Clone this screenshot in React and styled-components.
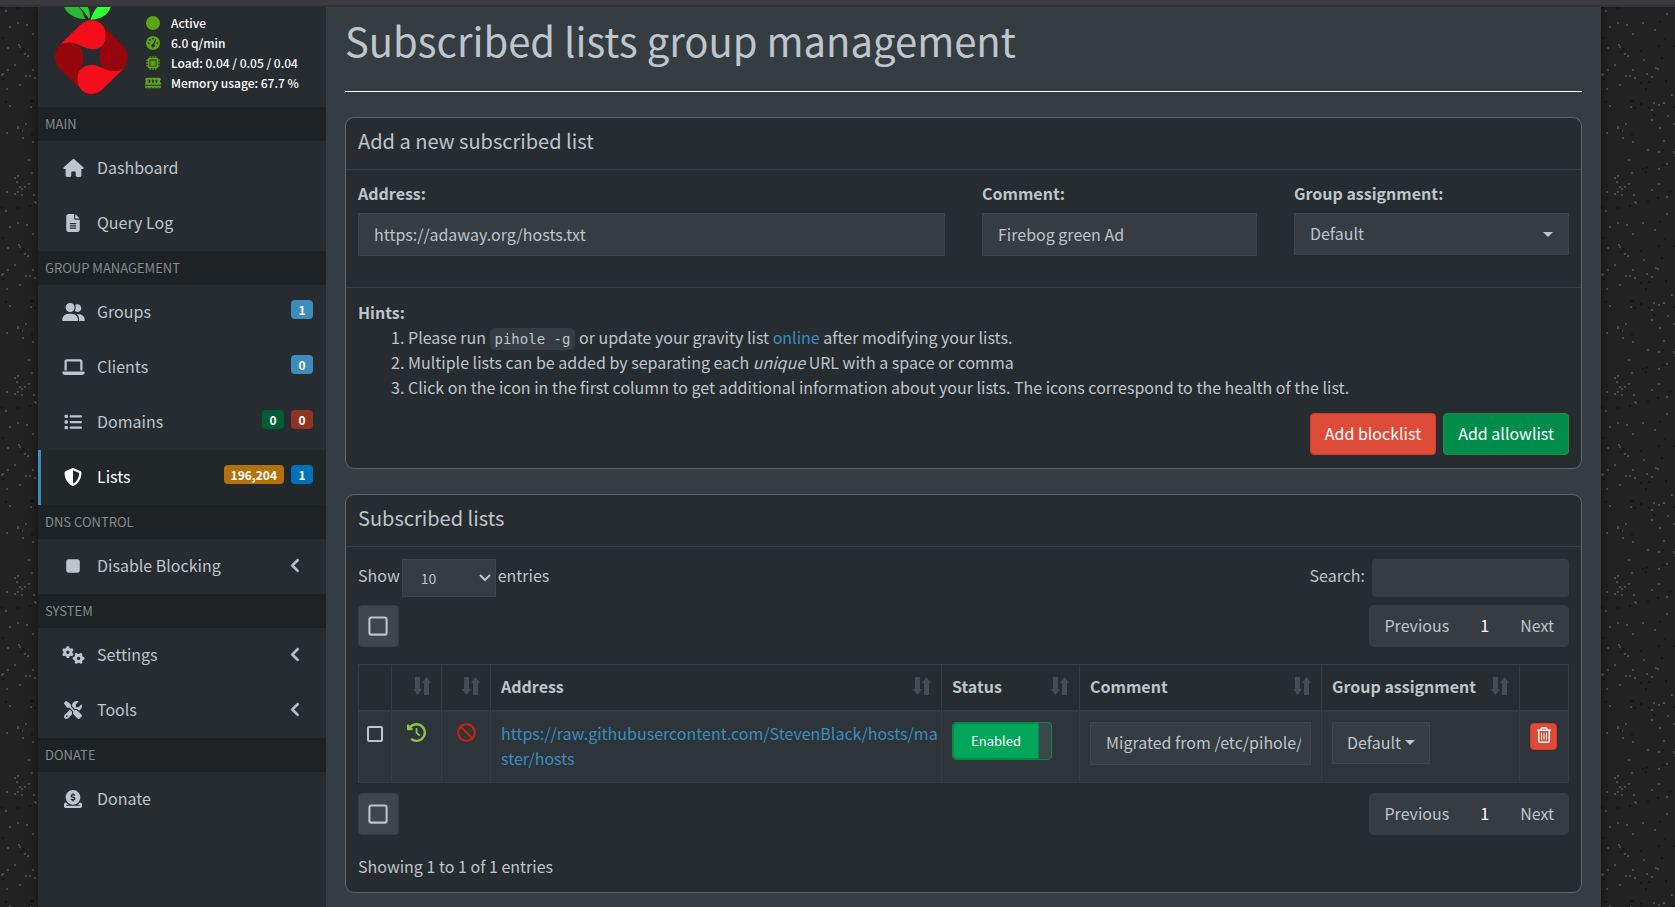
import React, { useState } from "react";
import styled, { createGlobalStyle } from "styled-components";
import {
  FaHouse, FaFileLines, FaUserGroup, FaLaptop, FaList, FaShieldHalved, FaStop,
  FaGears, FaScrewdriverWrench, FaCircleDollarToSlot, FaAngleLeft, FaCircle,
  FaMicrochip, FaMemory, FaRegSquare, FaClockRotateLeft, FaBan,
  FaRegTrashCan, FaGaugeHigh,
} from "react-icons/fa6";

const c = {
  page: "#222222",
  sidebar: "#272c30",
  sidebarHead: "#1e2225",
  active: "#22272a",
  content: "#353c42",
  line: "#353c42",
  field: "#353c42",
  fieldLine: "#3d444b",
  text: "#bec5cb",
  muted: "#848c8f",
  link: "#3c8dbc",
  row: "#2d343a",
};

/* Speckled tile for the area outside the boxed layout */
const speckle = (() => {
  let seed = 41;
  const next = (n) => {
    seed = (seed * 16807) % 2147483647;
    return seed % n;
  };
  let dots = "";
  for (let i = 0; i < 300; i += 1) {
    dots += `<rect x='${next(199)}' y='${next(199)}' width='2' height='2' fill='${i % 3 ? "#494949" : "#171717"}'/>`;
  }
  const svg = `<svg xmlns='http://www.w3.org/2000/svg' width='200' height='200'>${dots}</svg>`;
  return `url("data:image/svg+xml,${encodeURIComponent(svg).replace(/'/g, "%27")}")`;
})();

const Global = createGlobalStyle`
  *, *::before, *::after { box-sizing: border-box; }
  body {
    margin: 0;
    background: ${c.page} ${speckle};
    color: ${c.text};
    font: 16px/25px "Noto Sans CJK SC", "Noto Sans", sans-serif;
  }
  button, input, select { font: inherit; color: inherit; margin: 0; }
  button { cursor: pointer; }
  a { color: ${c.link}; text-decoration: none; }
`;

const Page = styled.div`
  min-height: 100vh;
  display: flex;
  flex-direction: column;
`;
const TopStrip = styled.div`
  height: 7px;
  background: #3d3a3f;
  border-bottom: 2px solid #323136;
`;
const Wrapper = styled.div`
  flex: 1;
  display: flex;
  margin: 0 74px 0 38px;
  background: ${c.content};
  box-shadow: 0 0 10px rgba(0, 0, 0, 0.5);
  clip-path: inset(0 -12px 0 -12px);
`;

const Sidebar = styled.aside`
  flex: 0 0 288px;
  background: ${c.sidebar};
`;
const UserPanel = styled.div`
  height: 100px;
  display: flex;
  gap: 16px;
  padding-left: 17px;
`;
const Stats = styled.ul`
  margin: 0;
  padding: 6px 0 0;
  list-style: none;
`;
const Stat = styled.li`
  display: flex;
  align-items: center;
  gap: 9px;
  font-size: 12px;
  font-weight: 500;
  line-height: 20px;
  color: #fff;
  white-space: nowrap;
  svg { width: 18px; height: 14px; color: #5ba414; }
`;
const NavHead = styled.h2`
  margin: 0;
  padding: 0 7px;
  background: ${c.sidebarHead};
  color: ${c.muted};
  font-size: 13px;
  font-weight: 400;
  line-height: 34px;
`;
const NavLink = styled.a`
  display: flex;
  align-items: center;
  height: 55px;
  padding: 0 13px 2px 20px;
  border-left: 3px solid ${(p) => (p.$active ? c.link : "transparent")};
  background: ${(p) => (p.$active ? c.active : "transparent")};
  color: ${(p) => (p.$active ? "#fff" : c.text)};
`;
const NavIcon = styled.span`
  width: 24px;
  margin-right: 12px;
  display: flex;
  justify-content: center;
  svg { width: ${(p) => (p.$wide ? 23 : 18)}px; height: 18px; }
`;
const NavText = styled.span`
  flex: 1;
`;
const Badges = styled.span`
  display: flex;
  gap: 7px;
  padding-bottom: 5px;
`;
const Badge = styled.span`
  padding: 0 7px;
  min-width: 22px;
  border-radius: 4px;
  background: ${(p) => p.$color};
  color: #fff;
  font-size: 12px;
  font-weight: 700;
  line-height: 19px;
  text-align: center;
`;
const Chevron = styled(FaAngleLeft)`
  margin-right: 9px;
  font-size: 17px;
  stroke: currentColor;
  stroke-width: 20px;
`;

const Content = styled.main`
  flex: 1;
  min-width: 0;
  padding: 0 19px 14px;
`;
const Title = styled.h1`
  margin: 0 0 25px;
  height: 85px;
  border-bottom: 1px solid #fff;
  font-size: 40px;
  font-weight: 400;
  line-height: 66px;
`;
const Box = styled.section`
  margin-bottom: 25px;
  border: 1px solid #666;
  border-radius: 9px;
  background: ${c.sidebar};
  &:last-child { margin-bottom: 0; }
`;
const BoxTitle = styled.h3`
  margin: 0;
  padding: 0 12px;
  height: 52px;
  border-bottom: 1px solid ${c.line};
  font-size: 20px;
  font-weight: 400;
  line-height: 46px;
`;
const FormRow = styled.div`
  display: grid;
  grid-template-columns: repeat(4, 1fr);
  gap: 37px;
  padding: 11px 12px 31px;
`;
const Field = styled.div`
  grid-column: span ${(p) => p.$span || 1};
  display: flex;
  flex-direction: column;
  gap: 7px;
`;
const Label = styled.label`
  font-weight: 700;
`;
const TextInput = styled.input`
  width: 100%;
  height: 43px;
  padding: 0 9px 2px 15px;
  border: 1px solid ${c.fieldLine};
  background: ${c.field};
`;
const caret = `url("data:image/svg+xml,%3Csvg xmlns='http://www.w3.org/2000/svg' width='10' height='5'%3E%3Cpath d='M0 0h10L5 5z' fill='%23bec5cb'/%3E%3C/svg%3E")`;
const chevron = `url("data:image/svg+xml,%3Csvg xmlns='http://www.w3.org/2000/svg' width='12' height='8'%3E%3Cpath d='M1 1l5 5 5-5' fill='none' stroke='%23bec5cb' stroke-width='2'/%3E%3C/svg%3E")`;
const Select = styled.select`
  appearance: none;
  width: ${(p) => p.$width || "100%"};
  height: 42px;
  padding: 0 15px 2px;
  border: 1px solid ${c.fieldLine};
  border-radius: 0;
  background: ${c.field} ${caret} no-repeat right 15px center;
`;
const LengthSelect = styled(Select)`
  height: 38px;
  padding: 0 18px;
  font-size: 14px;
  background: ${c.field} ${chevron} no-repeat right 4px center;
`;
const BoxFooter = styled.div`
  border-top: 1px solid ${c.line};
  padding: 12px 12px 13px;
`;
const Hints = styled.ol`
  margin: 0 0 13px;
  padding-left: 50px;
`;
const Code = styled.code`
  padding: 3px 5px;
  border-radius: 5px;
  background: ${c.field};
  font-family: "DejaVu Sans Mono", monospace;
  font-size: 14px;
  line-height: 1;
`;
const Actions = styled.div`
  display: flex;
  justify-content: flex-end;
  gap: 7px;
`;
const Button = styled.button`
  height: 42px;
  padding: 0 14px 2px;
  border: 1px solid ${(p) => (p.$danger ? "#d73925" : "#2f8a3c")};
  border-radius: 4px;
  background: ${(p) => (p.$danger ? "#dd4b39" : "#008d4c")};
  color: #fff;
`;

const BoxBody = styled.div`
  padding: 12px;
`;
const Bar = styled.div`
  display: flex;
  justify-content: space-between;
  align-items: flex-start;
  margin-bottom: ${(p) => p.$gap || 0}px;
`;
const Control = styled.label`
  display: flex;
  gap: ${(p) => p.$gap}px;
  line-height: 33px;
`;
const SearchInput = styled(TextInput)`
  width: 197px;
  height: 38px;
  border-color: transparent;
  border-radius: 4px;
`;
const SelectAll = styled.button`
  width: 41px;
  height: 42px;
  display: flex;
  align-items: center;
  justify-content: center;
  padding: 0 1px 1px 0;
  border: 1px solid #353c42;
  border-radius: 4px;
  background: #3e464c;
  font-size: 22px;
`;
const Pager = styled.nav`
  display: flex;
  border-radius: 5px;
  background: ${c.field};
`;
const PagerButton = styled.button`
  height: 42px;
  padding: 0 ${(p) => (p.$current ? 16 : 15)}px 2px;
  border: 0;
  background: transparent;
  color: ${(p) => (p.$current ? "#fff" : c.text)};
`;

const Table = styled.table`
  width: 100%;
  margin-bottom: 10px;
  table-layout: fixed;
  border-collapse: collapse;
`;
const Col = styled.col`
  width: ${(p) => p.$w || "auto"};
`;
const Th = styled.th`
  height: 46px;
  padding: 0 10px 2px;
  border: 1px solid ${c.line};
  border-bottom-width: 2px;
  text-align: left;
`;
const ThInner = styled.span`
  display: flex;
  justify-content: space-between;
  align-items: center;
  white-space: nowrap;
`;
const Td = styled.td`
  height: 72px;
  padding: ${(p) => (p.$wide ? "10px" : "10px 8px")};
  border: 1px solid ${c.line};
  background: ${c.row};
  vertical-align: top;
  text-align: ${(p) => (p.$wide ? "left" : "center")};
`;
const AddressTd = styled(Td)`
  padding: 9px 2px 10px 10px;
  word-break: break-all;
`;
const StatusIcon = styled.span`
  display: inline-flex;
  height: 22px;
  align-items: center;
  color: ${(p) => p.$color};
  font-size: 19px;
`;
const RowCheck = styled.input`
  appearance: none;
  display: block;
  width: 16px;
  height: 16px;
  margin: 4px auto 0;
  border: 2px solid ${c.text};
  border-radius: 2px;
  &:checked { background: ${c.link}; }
`;
const Toggle = styled.label`
  display: flex;
  width: 100px;
  height: 38px;
  border: 1px solid #008d4c;
  border-radius: 4px;
  background: #3e464c;
  color: #fff;
  font-size: 13px;
  line-height: 34px;
  cursor: pointer;
  input { position: absolute; opacity: 0; }
  span {
    flex: 1;
    margin-right: 12px;
    border: 1px solid #008d4c;
    border-radius: 4px 0 0 4px;
    background: #00a65a;
    text-align: center;
  }
`;
const GroupButton = styled.button`
  display: flex;
  align-items: center;
  justify-content: center;
  gap: 4px;
  width: 98px;
  height: 42px;
  padding: 0;
  border: 1px solid ${c.fieldLine};
  background: ${c.field};
  &::after {
    content: "";
    border: 5px solid transparent;
    border-top-color: ${c.text};
    border-bottom: 0;
  }
`;
const Trash = styled.button`
  display: flex;
  align-items: center;
  justify-content: center;
  width: 27px;
  height: 27px;
  margin-top: 1px;
  padding: 0 0 2px;
  border: 1px solid #d73925;
  border-radius: 4px;
  background: #dd4b39;
  color: #fff;
  font-size: 16px;
`;
const Info = styled.p`
  margin: 19px 0 1px;
`;

const Logo = () => (
  <svg width="73" height="87" viewBox="165 20 220 262" aria-label="Pi-hole">
    <path d="M192 20C204 46 236 58 256 56C250 42 246 30 237 20Z" fill="#2ab934" />
    <path d="M238 20C252 32 262 46 268 57C272 44 269 30 264 20Z" fill="#22d22f" />
    <path d="M272 58C278 42 284 30 292 20H333C324 45 300 58 272 58Z" fill="#2bff35" />
    <path d="M180 134L240 75Q257 60 275 60Q293 60 306 73Q319 87 318 104Q317 147 276 147C250 147 240 128 207 128Q192 128 180 134Z" fill="#f60d1a" />
    <path d="M306 73L370 137Q384 154 384 171Q384 188 375 202Q366 213 343 213Q300 212 299 172Q299 146 311 133Q318 124 318 104Q319 87 306 73Z" fill="#96060c" />
    <path d="M375 202L309 267Q293 282 275 282Q257 282 245 270Q232 257 232 238Q233 196 276 195C302 196 316 213 343 213Q365 213 375 202Z" fill="#f60d1a" />
    <path d="M180 134Q192 128 207 128Q249 130 250 172Q250 196 239 209Q232 219 232 238Q232 257 240 265L179 206Q165 190 165 171Q165 149 180 134Z" fill="#96060c" />
  </svg>
);

const SortIcon = () => (
  <svg width="18" height="20" viewBox="0 0 18 20" fill="#464d52" aria-hidden="true">
    <path d="M2 1h5v12h2L4.500 19 0 13h2z" />
    <path d="M11 19h5V7h2L13.500 1 9 7h2z" />
  </svg>
);

const stats = [
  [FaCircle, "Active"],
  [FaGaugeHigh, "6.0 q/min"],
  [FaMicrochip, "Load: 0.04 / 0.05 / 0.04"],
  [FaMemory, "Memory usage: 67.7 %"],
];

const nav = [
  { head: "MAIN", items: [
    { icon: FaHouse, text: "Dashboard", wide: true },
    { icon: FaFileLines, text: "Query Log" },
  ] },
  { head: "GROUP MANAGEMENT", items: [
    { icon: FaUserGroup, text: "Groups", wide: true, badges: [["1", "#3c8dbc"]] },
    { icon: FaLaptop, text: "Clients", wide: true, badges: [["0", "#3c8dbc"]] },
    { icon: FaList, text: "Domains", badges: [["0", "#005c32"], ["0", "#913225"]] },
    { icon: FaShieldHalved, text: "Lists", active: true, badges: [["196,204", "#b1720c"], ["1", "#0073b7"]] },
  ] },
  { head: "DNS CONTROL", items: [{ icon: FaStop, text: "Disable Blocking", more: true }] },
  { head: "SYSTEM", items: [
    { icon: FaGears, text: "Settings", wide: true, more: true },
    { icon: FaScrewdriverWrench, text: "Tools", more: true },
  ] },
  { head: "DONATE", items: [{ icon: FaCircleDollarToSlot, text: "Donate" }] },
];

const columns = [
  { w: "33px" },
  { w: "50px", sort: true },
  { w: "49px", sort: true },
  { text: "Address", sort: true },
  { w: "138px", text: "Status", sort: true },
  { w: "242px", text: "Comment", sort: true },
  { w: "198px", text: "Group assignment", sort: true },
  { w: "49px" },
];

const Paging = () => (
  <Bar $gap={17}>
    <SelectAll type="button" aria-label="Select all"><FaRegSquare /></SelectAll>
    <Pager aria-label="Pages">
      <PagerButton type="button">Previous</PagerButton>
      <PagerButton type="button" $current>1</PagerButton>
      <PagerButton type="button">Next</PagerButton>
    </Pager>
  </Bar>
);

export default function App() {
  const [enabled, setEnabled] = useState(true);
  return (
    <Page>
      <Global />
      <TopStrip />
      <Wrapper>
        <Sidebar>
          <UserPanel>
            <Logo />
            <Stats>
              {stats.map(([Icon, text]) => <Stat key={text}><Icon />{text}</Stat>)}
            </Stats>
          </UserPanel>
          <nav>
            {nav.map(({ head, items }) => (
              <React.Fragment key={head}>
                <NavHead>{head}</NavHead>
                {items.map(({ icon: Icon, text, wide, active, badges, more }) => (
                  <NavLink key={text} href="#" $active={active}>
                    <NavIcon $wide={wide}><Icon /></NavIcon>
                    <NavText>{text}</NavText>
                    {badges && (
                      <Badges>
                        {badges.map(([n, color]) => <Badge key={color} $color={color}>{n}</Badge>)}
                      </Badges>
                    )}
                    {more && <Chevron />}
                  </NavLink>
                ))}
              </React.Fragment>
            ))}
          </nav>
        </Sidebar>
        <Content>
          <Title>Subscribed lists group management</Title>
          <Box>
            <BoxTitle>Add a new subscribed list</BoxTitle>
            <FormRow>
              <Field $span={2}>
                <Label htmlFor="address">Address:</Label>
                <TextInput id="address" defaultValue="https://adaway.org/hosts.txt" />
              </Field>
              <Field>
                <Label htmlFor="comment">Comment:</Label>
                <TextInput id="comment" defaultValue="Firebog green Ad" />
              </Field>
              <Field>
                <Label htmlFor="group">Group assignment:</Label>
                <Select id="group"><option>Default</option></Select>
              </Field>
            </FormRow>
            <BoxFooter>
              <strong>Hints:</strong>
              <Hints>
                <li>Please run <Code>pihole -g</Code> or update your gravity list <a href="#online">online</a> after modifying your lists.</li>
                <li>Multiple lists can be added by separating each <em>unique</em> URL with a space or comma</li>
                <li>Click on the icon in the first column to get additional information about your lists. The icons correspond to the health of the list.</li>
              </Hints>
              <Actions>
                <Button type="button" $danger>Add blocklist</Button>
                <Button type="button">Add allowlist</Button>
              </Actions>
            </BoxFooter>
          </Box>
          <Box>
            <BoxTitle>Subscribed lists</BoxTitle>
            <BoxBody>
              <Bar $gap={8}>
                <Control $gap={2}>
                  Show
                  <LengthSelect $width="94px"><option>10</option></LengthSelect>
                  entries
                </Control>
                <Control $gap={7}>Search:<SearchInput type="search" /></Control>
              </Bar>
              <Paging />
              <Table>
                <colgroup>{columns.map((col, i) => <Col key={i} $w={col.w} />)}</colgroup>
                <thead>
                  <tr>
                    {columns.map((col, i) => (
                      <Th key={i}><ThInner><span>{col.text}</span>{col.sort && <SortIcon />}</ThInner></Th>
                    ))}
                  </tr>
                </thead>
                <tbody>
                  <tr>
                    <Td><RowCheck type="checkbox" aria-label="Select row" /></Td>
                    <Td><StatusIcon $color="#8bc34a"><FaClockRotateLeft /></StatusIcon></Td>
                    <Td><StatusIcon $color="#bd2413"><FaBan /></StatusIcon></Td>
                    <AddressTd $wide><a href="#list">https://raw.githubusercontent.com/StevenBlack/hosts/master/hosts</a></AddressTd>
                    <Td $wide>
                      <Toggle>
                        <input type="checkbox" checked={enabled} onChange={() => setEnabled(!enabled)} />
                        <span>{enabled ? "Enabled" : "Disabled"}</span>
                      </Toggle>
                    </Td>
                    <Td $wide><TextInput aria-label="List comment" defaultValue="Migrated from /etc/pihole/adlists.list" /></Td>
                    <Td $wide><GroupButton type="button">Default</GroupButton></Td>
                    <Td $wide><Trash type="button" aria-label="Delete"><FaRegTrashCan /></Trash></Td>
                  </tr>
                </tbody>
              </Table>
              <Paging />
              <Info>Showing 1 to 1 of 1 entries</Info>
            </BoxBody>
          </Box>
        </Content>
      </Wrapper>
    </Page>
  );
}
